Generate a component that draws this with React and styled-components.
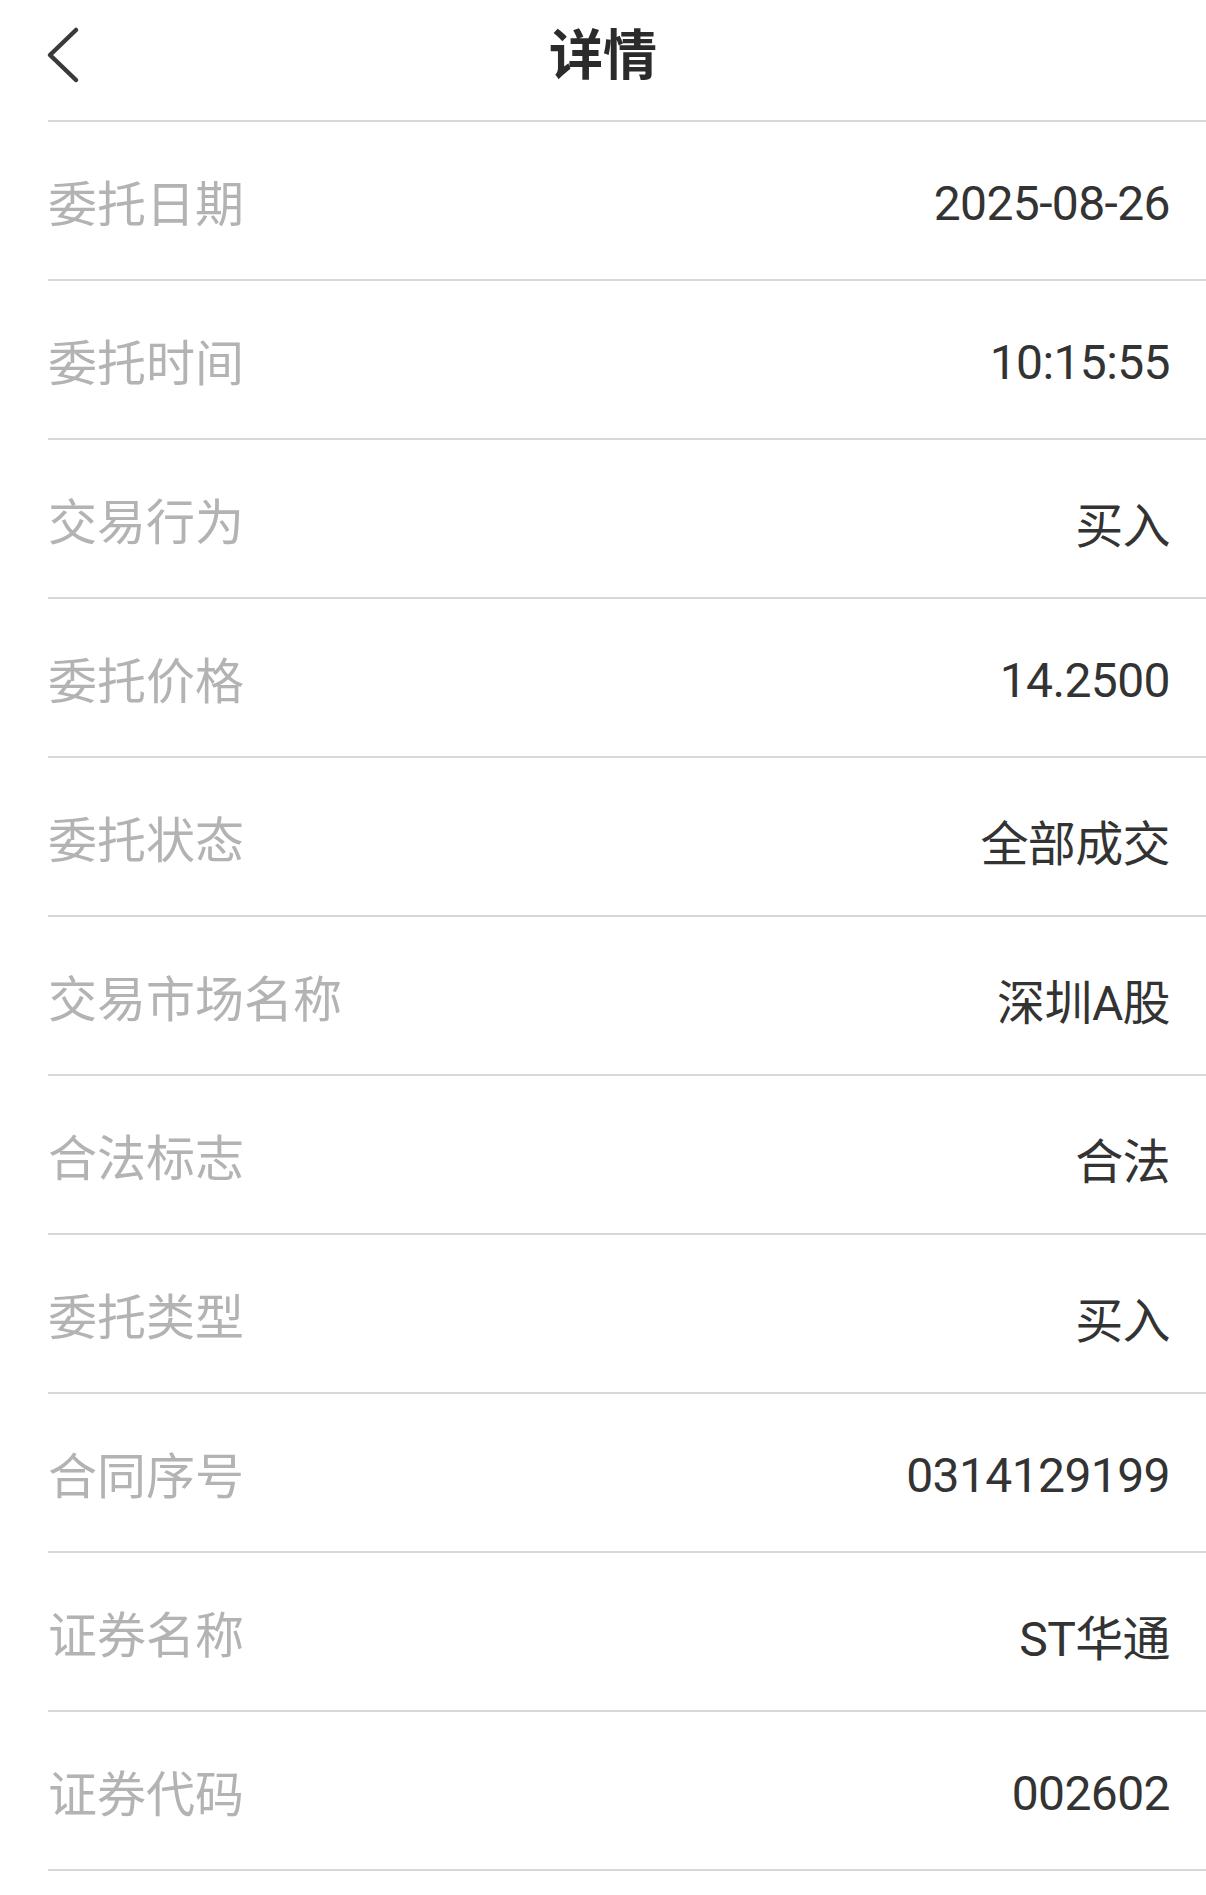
import styled, { createGlobalStyle } from "styled-components";

const GlobalStyle = createGlobalStyle`
  html, body {
    margin: 0;
    padding: 0;
    background: #ffffff;
  }
  body {
    font-family: "Noto Sans", "Noto Sans CJK SC", sans-serif;
  }
  * {
    box-sizing: border-box;
  }
`;

const colors = {
  title: "#2b2b2b",
  label: "#b3b3b3",
  value: "#333333",
  line: "#d8d8d8",
};

const Page = styled.div`
  width: 1206px;
  min-height: 1895px;
  background: #fff;
`;

const Header = styled.header`
  height: 120px;
  display: grid;
  grid-template-columns: 1fr auto 1fr;
  align-items: center;
`;

const BackButton = styled.button`
  justify-self: start;
  display: flex;
  align-items: center;
  padding: 0 0 10px 46px;
  margin: 0;
  border: none;
  background: none;
  cursor: pointer;
`;

const Title = styled.h1`
  margin: 0 0 18px 0;
  font-family: "Noto Sans CJK SC", sans-serif;
  font-size: 54px;
  font-weight: 700;
  color: ${colors.title};
`;

const List = styled.div`
  margin-left: 48px;
  border-top: 2px solid ${colors.line};
`;

const Row = styled.div`
  height: 159px;
  display: flex;
  align-items: center;
  justify-content: space-between;
  padding: 0 36px 0 0;
  border-bottom: 2px solid ${colors.line};
`;

const Label = styled.span`
  font-family: "Noto Sans CJK SC", sans-serif;
  font-size: 49px;
  color: ${colors.label};
`;

const Value = styled.span`
  padding-top: 6px;
  font-family: Roboto, "Noto Sans CJK SC", sans-serif;
  font-size: 48px;
  font-weight: 400;
  letter-spacing: -0.6px;
  color: ${colors.value};
`;

const rows = [
  ["委托日期", "2025-08-26"],
  ["委托时间", "10:15:55"],
  ["交易行为", "买入"],
  ["委托价格", "14.2500"],
  ["委托状态", "全部成交"],
  ["交易市场名称", "深圳A股"],
  ["合法标志", "合法"],
  ["委托类型", "买入"],
  ["合同序号", "0314129199"],
  ["证券名称", "ST华通"],
  ["证券代码", "002602"],
];

const ChevronLeft = () => (
  <svg width="34" height="58" viewBox="0 0 34 58">
    <polyline
      points="30,4 4,29 30,54"
      fill="none"
      stroke="#3a3a3a"
      strokeWidth="4.5"
      strokeLinecap="round"
      strokeLinejoin="round"
    />
  </svg>
);

export default function App() {
  return (
    <Page>
      <GlobalStyle />
      <Header>
        <BackButton>
          <ChevronLeft />
        </BackButton>
        <Title>详情</Title>
        <div />
      </Header>
      <List>
        {rows.map(([label, value]) => (
          <Row key={label}>
            <Label>{label}</Label>
            <Value>{value}</Value>
          </Row>
        ))}
      </List>
    </Page>
  );
}
